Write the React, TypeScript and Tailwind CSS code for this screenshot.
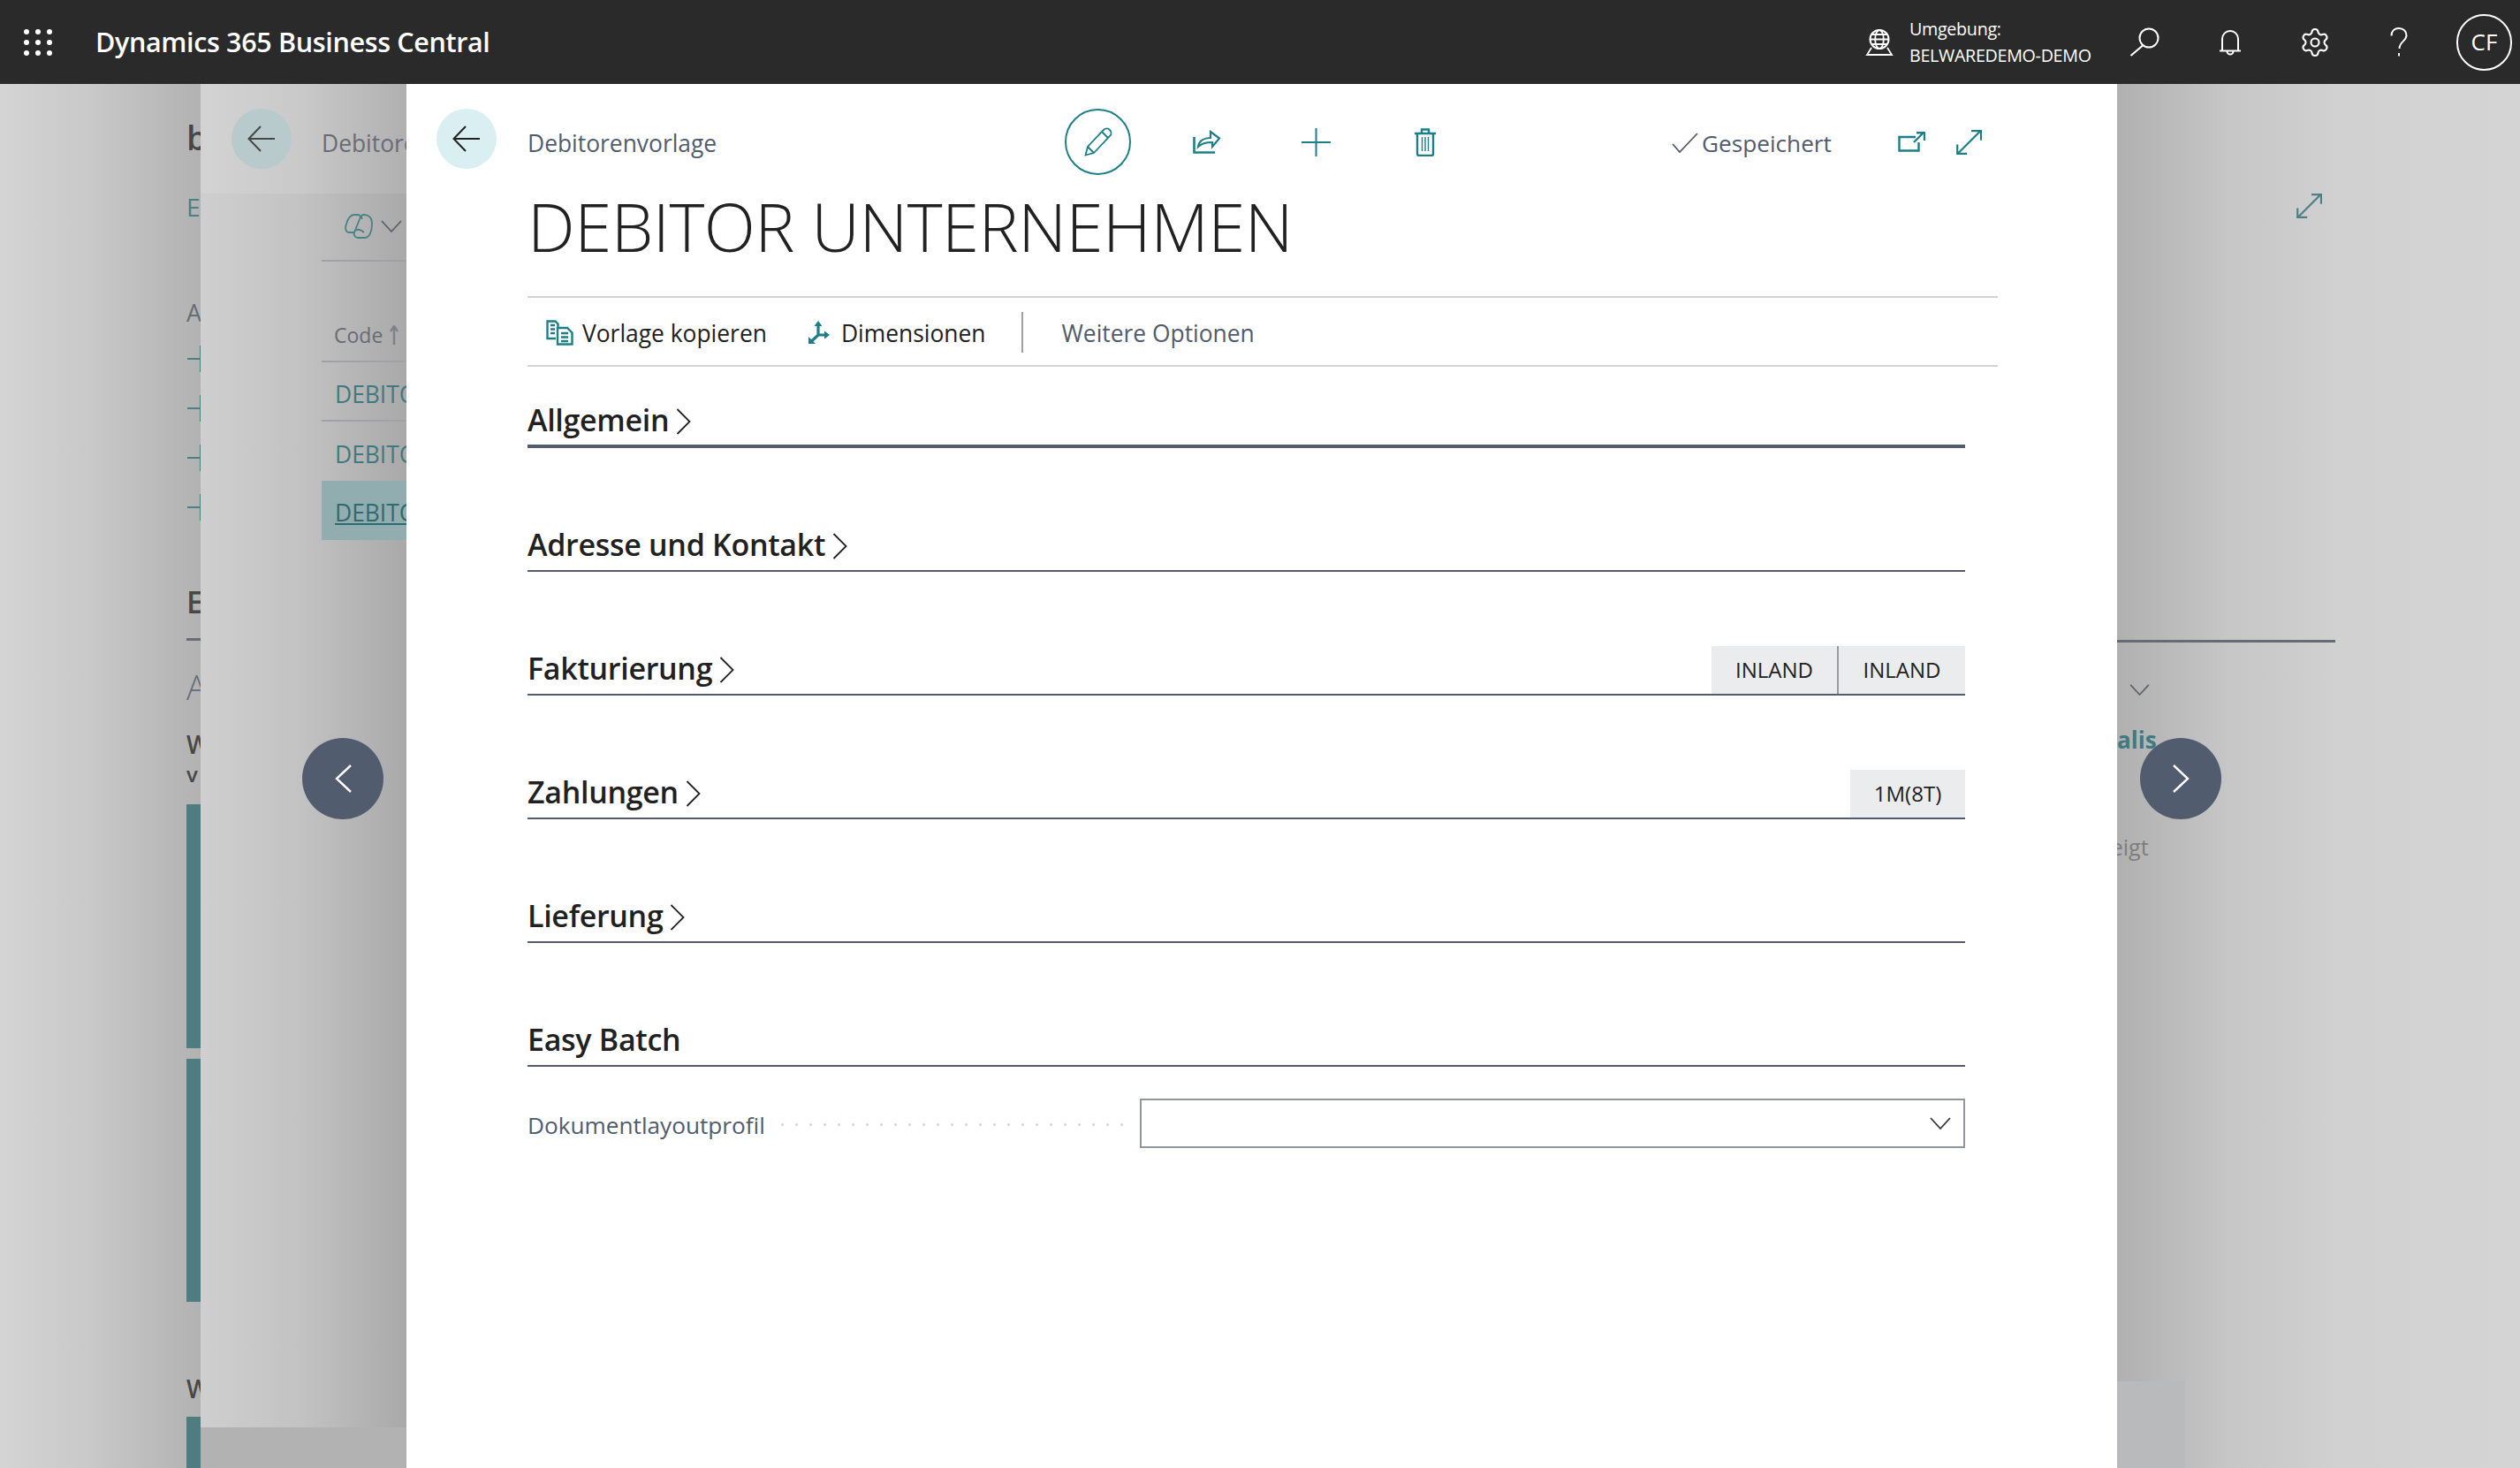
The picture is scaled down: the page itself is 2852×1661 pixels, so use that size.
import { Settings } from "lucide-react";
import type { ReactNode } from "react";

const sections: { title: string; chevron: boolean; badges: { label: string; width: string }[] }[] = [
  { title: "Allgemein", chevron: true, badges: [] },
  { title: "Adresse und Kontakt", chevron: true, badges: [] },
  {
    title: "Fakturierung",
    chevron: true,
    badges: [
      { label: "INLAND", width: "w-[142px]" },
      { label: "INLAND", width: "w-[145px]" },
    ],
  },
  { title: "Zahlungen", chevron: true, badges: [{ label: "1M(8T)", width: "w-[130px]" }] },
  { title: "Lieferung", chevron: true, badges: [] },
  { title: "Easy Batch", chevron: false, badges: [] },
];

function Svg({ w, h, box, className, children }: { w: number; h: number; box?: string; className?: string; children: ReactNode }) {
  return (
    <svg
      width={w}
      height={h}
      viewBox={box ?? `0 0 ${w} ${h}`}
      fill="none"
      stroke="currentColor"
      className={`block shrink-0 ${className ?? ""}`}
    >
      {children}
    </svg>
  );
}

function BackArrow({ className }: { className?: string }) {
  return (
    <Svg w={32} h={30} className={className}>
      <path d="M31 15H2M15 1 1.5 15 15 29" strokeWidth="2" />
    </Svg>
  );
}

function Expand({ className, w = 29, h = 28 }: { className?: string; w?: number; h?: number }) {
  return (
    <Svg w={w} h={h} box="0 0 29 28" className={className}>
      <path d="M27.5 1 1.5 27M17 1.2h11v10.5M1.2 16.5v10.3h11" strokeWidth="2.2" />
    </Svg>
  );
}

function Chevron({ className }: { className?: string }) {
  return (
    <Svg w={17} h={30} className={className}>
      <path d="M1.5 1 15.5 15 1.5 29" strokeWidth="1.8" />
    </Svg>
  );
}

function DownChevron({ className, w = 24, h = 16 }: { className?: string; w?: number; h?: number }) {
  return (
    <Svg w={w} h={h} box="0 0 24 16" className={className}>
      <path d="M1 2 12 14 23 2" strokeWidth="1.8" />
    </Svg>
  );
}

function NavButton({ dir, className }: { dir: "left" | "right"; className: string }) {
  return (
    <div className={`absolute top-[740px] flex h-[92px] w-[92px] items-center justify-center rounded-full bg-[#515d6e] text-white ${className}`}>
      <Svg w={19} h={32}>
        <path d={dir === "left" ? "M18 1 2 16 18 31" : "M1 1 17 16 1 31"} strokeWidth="2.4" />
      </Svg>
    </div>
  );
}

function Header() {
  return (
    <header className="flex h-[95px] shrink-0 items-center bg-[#2a2a2a] text-white">
      <svg width="32" height="30" viewBox="0 0 32 30" fill="currentColor" className="ml-[27px] block shrink-0">
        {[3, 15, 27].map((y) => [3, 16, 29].map((x) => <circle key={`${x}-${y}`} cx={x} cy={y} r="3" />))}
      </svg>
      <h1 className="ml-[49px] text-[30.5px] font-semibold tracking-[-0.35px]">Dynamics 365 Business Central</h1>
      <div className="ml-auto flex items-center">
        <Svg w={32} h={30}>
          <circle cx="16" cy="11.5" r="10.5" strokeWidth="2" />
          <ellipse cx="16" cy="11.5" rx="4.8" ry="10.5" strokeWidth="1.8" />
          <path d="M5.5 11.5h21M7 6h18M7 17h18M7 21 2 29h28l-5-8" strokeWidth="1.8" />
        </Svg>
        <div className="ml-[18px] w-[203px] text-[19.7px] leading-[30px] tracking-[-0.3px]">
          <div>Umgebung:</div>
          <div className="whitespace-nowrap">BELWAREDEMO-DEMO</div>
        </div>
        <Svg w={34} h={33} className="ml-[46px]">
          <circle cx="22" cy="12" r="10.5" strokeWidth="2" />
          <path d="M15 20.5 1.5 32" strokeWidth="2.2" />
        </Svg>
        <Svg w={26} h={30} className="ml-[67px]">
          <path d="M4 24V11a9 9 0 0 1 18 0v13M1 24.5h24M9.500 25a3.500 3.500 0 0 0 7 0" strokeWidth="2" />
        </Svg>
        <Settings size={36} strokeWidth={1.4} className="ml-[65px]" />
        <Svg w={20} h={33} className="ml-[67px]">
          <path d="M1.5 9.500C1.5 4 5 1 10 1s8.500 3.500 8.500 8c0 6.500-8 7-8 15M10 29v3.500" strokeWidth="2" />
        </Svg>
        <div className="ml-[55px] mr-[9px] flex h-[64px] w-[63px] items-center justify-center rounded-full border-2 border-white text-[26px]">CF</div>
      </div>
    </header>
  );
}

/* Outer page, mostly hidden behind the two stacked panels */
function BasePage() {
  return (
    <div className="absolute inset-0 flex bg-[linear-gradient(90deg,#d4d4d4_0,#c9c9c9_100px,#b2b2b2_227px,#b0b0b0_2396px,#c6c6c6_2520px,#d1d1d1_2650px,#d4d4d4_2852px)]">
      <div className="h-full w-[227px] shrink-0 overflow-hidden pl-[211px]">
        <div className="w-[300px]">
          <div className="mt-[36px] text-[38px] font-semibold leading-[48px] text-[#474747]">b</div>
          <div className="mt-[35px] text-[28px] leading-[40px] text-[#4b8086]">E</div>
          <div className="mt-[80px] text-[27px] leading-[40px] text-[#676c75]">A</div>
          <div className="mt-[17px] flex flex-col gap-[26px]">
            {[0, 1, 2, 3].map((i) => (
              <Svg key={i} w={32} h={30} className="text-[#4b8086]">
                <path d="M1 15h30M16 0v30" strokeWidth="2" />
              </Svg>
            ))}
          </div>
          <div className="mt-[68px] text-[34px] font-semibold leading-[48px] text-[#484848]">E</div>
          <div className="mt-[17px] h-[3px] bg-[#676c75]" />
          <div className="mt-[28px] text-[38px] font-light leading-[48px] text-[#676c75]">A</div>
          <div className="mt-[25px] text-[28px] font-semibold leading-[32px] text-[#484848]">W</div>
          <div className="mt-[3px] text-[24px] font-semibold leading-[30px] text-[#484848]">v</div>
          <div className="mt-[19px] flex flex-col gap-[12px]">
            <div className="h-[276px] bg-[#4e7c80]" />
            <div className="h-[275px] bg-[#4e7c80]" />
          </div>
          <div className="mt-[82px] text-[28px] font-semibold leading-[32px] text-[#484848]">W</div>
          <div className="mt-[16px] h-[60px] bg-[#4e7c80]" />
        </div>
      </div>
      <div className="ml-[2169px] w-[456px] overflow-hidden">
        <div className="mt-[629px] h-[3px] w-[247px] bg-[#676c72]" />
        <DownChevron className="ml-[10px] mt-[46px] text-[#5e636a]" w={31} h={15} />
        <div className="-ml-[61px] mt-[31px] whitespace-nowrap text-[26px] font-bold leading-[36px] text-[#3f7a80]">Digitalis.</div>
        <div className="-ml-[19px] mt-[85px] whitespace-nowrap text-[25px] leading-[36px] text-[#7d7d7d]">zeigt</div>
        <div className="mt-[587px] h-[100px] w-[77px] bg-[#b9babb]" />
      </div>
      <Expand className="absolute left-[2599px] top-[124px] text-[#4b8086]" />
    </div>
  );
}

/* Second panel (list of templates), covered by the card from x=460 */
function ListPanel() {
  return (
    <div className="absolute left-[227px] top-0 h-[1520px] w-[233px] overflow-hidden bg-[linear-gradient(90deg,#cfcfcf,#c2c2c2_50%,#a9a9a9)]">
      <div className="flex h-[124px] items-start bg-[linear-gradient(90deg,#d3d3d3,#c9c9c9_50%,#b0b0b0)] pl-[35px] pt-[28px]">
        <div className="flex h-[68px] w-[68px] shrink-0 items-center justify-center rounded-full bg-[#b8cacc] text-[#474747]">
          <BackArrow />
        </div>
        <div className="ml-[34px] whitespace-nowrap pt-[19px] text-[26.4px] leading-[40px] text-[#676c75]">Debitorenvorlage</div>
      </div>
      <div className="ml-[137px] w-[400px]">
        <div className="flex h-[77px] items-center border-b-2 border-[#9fa1a5] pb-[2px] pl-[26px]">
          <Svg w={32} h={29} className="text-[#4b8086]">
            <path d="M15 2h-4C6 2 3 8 1.500 14 .5 19 2 22 5 22h6" strokeWidth="1.800" />
            <path d="M22 2c5 0 9 3 9 10 0 9-3 16-8 16h-8c-3 0-5-3-4-6l6-15c1-3 3-5 5-5Z" strokeWidth="1.800" />
            <path d="M14 2c3 0 5 2 6 5M12 20c3-2 7-1 10 2" strokeWidth="1.800" />
          </Svg>
          <DownChevron className="ml-[9px] text-[#5e636a]" />
        </div>
        <div className="flex h-[114px] items-end border-b-2 border-[#a0a2a6] pb-[14px] pl-[14px] text-[23px] leading-[30px] text-[#676c75]">
          Code
          <Svg w={10} h={22} className="mb-[4px] ml-[8px] text-[#7e8186]">
            <path d="M5 22V2M1 7l4-6 4 6" strokeWidth="2.400" />
          </Svg>
        </div>
        <div className="flex h-[67px] items-center border-b-2 border-[#a0a2a6] pl-[15px] pt-[9px] text-[26.4px] text-[#3f7a80]">DEBITOR</div>
        <div className="flex h-[67px] items-center pl-[15px] pt-[9px] text-[26.4px] text-[#3f7a80]">DEBITOR</div>
        <div className="flex h-[67px] items-center bg-[#92adb0] pl-[15px] pt-[7px] text-[26.4px] text-[#2f6a70] underline">DEBITOR</div>
      </div>
    </div>
  );
}

function Card() {
  const teal = "text-[#1c7f87]";
  return (
    <main className="absolute bottom-0 left-[460px] top-0 w-[1936px] bg-white">
      <div className="flex h-[103px] items-start pl-[34px] pr-[153px] pt-[28px]">
        <div className="flex h-[68px] w-[68px] shrink-0 items-center justify-center rounded-full bg-[#daeff2] text-[#212121]">
          <BackArrow />
        </div>
        <div className="ml-[35px] w-[608px] whitespace-nowrap pt-[19px] text-[26.4px] leading-[40px] text-[#515c6d]">Debitorenvorlage</div>
        <div className={`flex h-[75px] w-[75px] shrink-0 items-center justify-center rounded-full border-2 border-[#1c7f87] ${teal}`}>
          <Svg w={32} h={33}>
            <path d="M1.5 31.5 4 22 22 3c2-2 5-2 7 0s2 5 0 7L11 29ZM4 22l7 7M20 5l7 7" strokeWidth="1.8" />
          </Svg>
        </div>
        <Svg w={32} h={27} className={`ml-[70px] mt-[24px] ${teal}`}>
          <path d="M1.500 8v17.500H25" strokeWidth="2.600" />
          <path d="M6 19C7 12 13 9 20 9V2l10 7.500L22 19v-5c-7 0-12 1-16 5Z" strokeWidth="2.200" />
        </Svg>
        <Svg w={33} h={32} className={`ml-[91px] mt-[22px] ${teal}`}>
          <path d="M0 16h33M16.500 0v32" strokeWidth="2" />
        </Svg>
        <Svg w={24} h={32} className={`ml-[95px] mt-[22px] ${teal}`}>
          <path d="M0 6h24M8 6V1.500h8V6M3 6v23c0 1.500 1 2 2 2h14c1 0 2-.5 2-2V6" strokeWidth="2.400" />
          <path d="M8.500 10v16M12 10v16M15.500 10v16" strokeWidth="1.400" />
        </Svg>
        <div className="ml-auto flex items-start">
          <Svg w={30} h={23} className="mt-[27px] text-[#515c6d]">
            <path d="M1 13l8 9L29 1" strokeWidth="1.8" />
          </Svg>
          <div className="ml-[4px] w-[222px] whitespace-nowrap pt-[19px] text-[26.2px] leading-[40px] text-[#515c6d]">Gespeichert</div>
          <Svg w={31} h={23} className={`mt-[26px] ${teal}`}>
            <path d="M20 6H1.500v15.500h22V12M18 12 28 2M21 1.200h9V10" strokeWidth="2.400" />
          </Svg>
          <Expand className={`ml-[35px] mt-[24px] ${teal}`} />
        </div>
      </div>

      <div className="pl-[137px] pr-[135px]">
        <h2 className="mt-[13px] h-[90px] whitespace-nowrap text-[76px] font-light leading-[90px] tracking-[-0.5px] text-[#212121]">DEBITOR UNTERNEHMEN</h2>
        <div className="mt-[34px] flex h-[80px] items-center border-y-2 border-[#d1d3d6] pt-[2px] text-[26.4px] text-[#212121]">
          <Svg w={31} h={29} className={`ml-[21px] ${teal}`}>
            <path d="M11 21H1.500V1.500h9l3 3V9M5 6h5M5 10.500h5M5 15h5" strokeWidth="2.400" />
            <path d="M13 9h11l5.500 5.500v13H13ZM17 15h8M17 19.500h8M17 24h8" strokeWidth="2.400" />
          </Svg>
          <span className="ml-[10px] whitespace-nowrap pt-[3px]">Vorlage kopieren</span>
          <Svg w={24} h={26} className={`ml-[47px] ${teal}`}>
            <path d="M11 16V3M11 16h10M11 16 3 23.500" strokeWidth="3.200" />
            <path d="M11 0 6.500 6h9ZM24 16l-6-4.500v9ZM0 26v-8l8 8Z" fill="currentColor" stroke="none" />
          </Svg>
          <span className="ml-[13px] whitespace-nowrap pt-[3px]">Dimensionen</span>
          <span className="ml-[41px] h-[46px] w-[2px] bg-[#9ca0a6]" />
          <span className="ml-[43px] whitespace-nowrap pt-[3px] text-[#515c6d]">Weitere Optionen</span>
        </div>
      </div>

      <div className="pl-[137px] pr-[172px]">
        {sections.map((s, i) => (
          <section
            key={s.title}
            className={`flex h-[56px] items-center justify-between ${i === 0 ? "mt-[36px] border-b-4" : "mt-[84px] border-b-2"} border-[#515c6d]`}
          >
            <div className="flex items-center pb-[4px] text-[#212121]">
              <span className="whitespace-nowrap text-[34px] font-semibold tracking-[-0.3px]">{s.title}</span>
              {s.chevron && <Chevron className="ml-[8px] mt-[4px]" />}
            </div>
            <div className="flex h-full">
              {s.badges.map((b, j) => (
                <span
                  key={j}
                  className={`flex h-full items-center justify-center bg-[#ebecee] text-[24px] text-[#212121] ${b.width} ${j > 0 ? "border-l-2 border-[#9a9ca0]" : ""}`}
                >
                  {b.label}
                </span>
              ))}
            </div>
          </section>
        ))}

        <div className="mt-[36px] flex h-[56px] items-center">
          <span className="w-[287px] shrink-0 whitespace-nowrap pt-[6px] text-[26.2px] text-[#515c6d]">Dokumentlayoutprofil</span>
          <span className="flex gap-[13px] pt-[3px]">
            {Array.from({ length: 25 }, (_, i) => (
              <span key={i} className="h-[3px] w-[3px] rounded-full bg-[#d4d4d4]" />
            ))}
          </span>
          <div className="ml-auto flex h-full w-[934px] items-center justify-end border-2 border-[#8f969e] pr-[14px] text-[#3a3a3a]">
            <DownChevron w={24} h={16} />
          </div>
        </div>
      </div>
    </main>
  );
}

export default function App() {
  return (
    <div className="flex h-[1661px] w-[2852px] flex-col overflow-hidden font-['Open_Sans',sans-serif]">
      <Header />
      <div className="relative flex-1">
        <BasePage />
        <ListPanel />
        <Card />
        <NavButton dir="left" className="left-[342px]" />
        <NavButton dir="right" className="left-[2422px]" />
      </div>
    </div>
  );
}
